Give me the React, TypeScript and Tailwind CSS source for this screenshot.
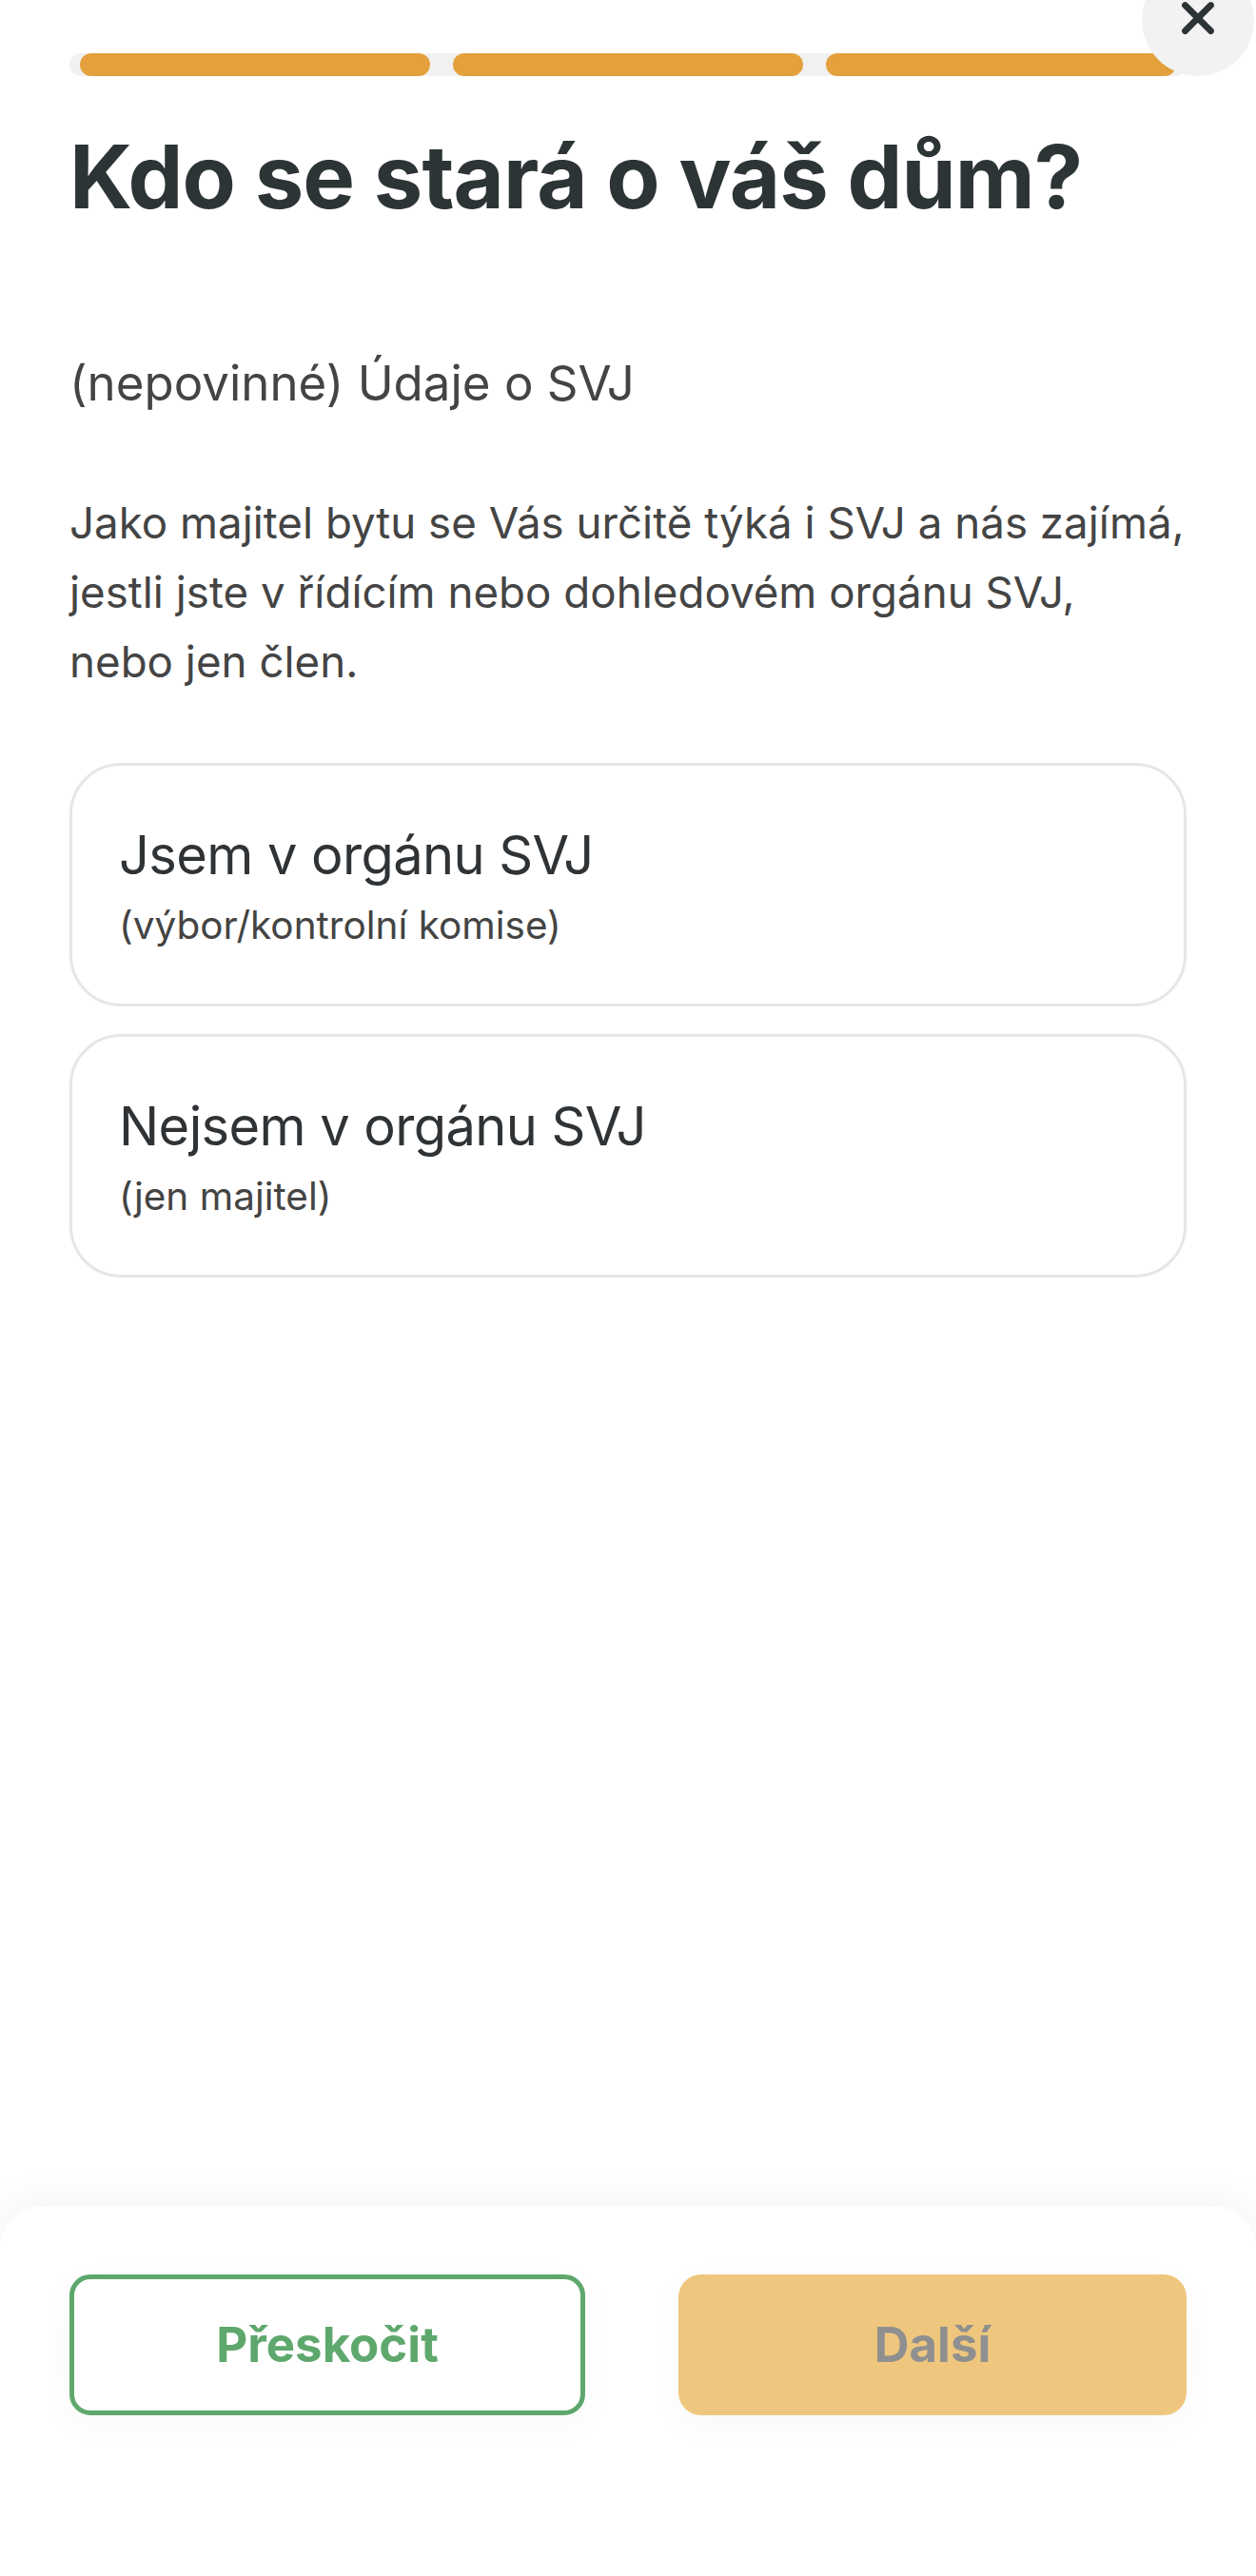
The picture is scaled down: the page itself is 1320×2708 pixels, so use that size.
import { X } from "lucide-react";

const STEPS = [0, 1, 2];

const OPTIONS = [
  { title: "Jsem v orgánu SVJ", note: "(výbor/kontrolní komise)" },
  { title: "Nejsem v orgánu SVJ", note: "(jen majitel)" },
];

function OptionCard({ title, note }: { title: string; note: string }) {
  return (
    <button
      type="button"
      className="flex h-[256px] w-full flex-col justify-start rounded-[54px] border-[3px] border-[#e6e6e6] bg-white pl-[49px] pt-[58px] text-left"
    >
      <span className="block text-[56px] leading-[72px] tracking-[-0.6px] text-[#2f3336]">{title}</span>
      <span className="mt-[14px] block text-[40.5px] leading-[48px] text-[#444444]">{note}</span>
    </button>
  );
}

export default function App() {
  return (
    <div className="relative h-[2708px] overflow-hidden bg-white font-['Inter','Noto_Sans',sans-serif]">
      <button
        type="button"
        aria-label="Zavřít"
        className="absolute left-[1200px] top-[-38px] z-10 flex h-[118px] w-[118px] items-end justify-center rounded-full bg-[#f2f2f2] pb-[34px] text-[#2d3436]"
      >
        <X size={54} strokeWidth={3} aria-hidden="true" />
      </button>

      <main className="px-[73px] pt-[56px]">
        <div className="flex h-6 gap-6 rounded-full bg-[#f1f1f1] px-[11px]">
          {STEPS.map((s) => (
            <span key={s} className="h-6 flex-1 rounded-full bg-[#e3a03c]" />
          ))}
        </div>

        <h1 className="mt-[51px] text-[92px] font-bold leading-[110px] tracking-[-1px] text-[#2d3436]">
          Kdo se stará o váš dům?
        </h1>

        <p className="mt-[131px] text-[51px] leading-[62px] text-[#444444]">(nepovinné) Údaje o SVJ</p>

        <p className="mt-[79px] text-[45.7px] leading-[73px] text-[#444444]">
          Jako majitel bytu se Vás určitě týká i SVJ a nás zajímá,
          <br />
          jestli jste v řídícím nebo dohledovém orgánu SVJ,
          <br />
          nebo jen člen.
        </p>

        <div className="mt-[70px] flex flex-col gap-[29px]">
          {OPTIONS.map((o) => (
            <OptionCard key={o.title} title={o.title} note={o.note} />
          ))}
        </div>
      </main>

      <footer className="absolute inset-x-0 bottom-0 h-[389px] rounded-t-[45px] bg-white px-[73px] pt-[72px] shadow-[0_-12px_40px_rgba(0,0,0,0.045)]">
        <div className="flex justify-between">
          <button
            type="button"
            className="flex h-[148px] w-[542px] items-center justify-center rounded-[22px] border-[5px] border-[#5ea86d] bg-white text-[51px] font-bold text-[#5ea86d] shadow-[0_10px_40px_rgba(0,0,0,0.03)]"
          >
            Přeskočit
          </button>
          <button
            type="button"
            className="flex h-[148px] w-[534px] items-center justify-center rounded-[24px] bg-[#eec67e] text-[51px] font-bold text-[#8f8f8f] shadow-[0_10px_40px_rgba(0,0,0,0.03)]"
          >
            Další
          </button>
        </div>
      </footer>
    </div>
  );
}
